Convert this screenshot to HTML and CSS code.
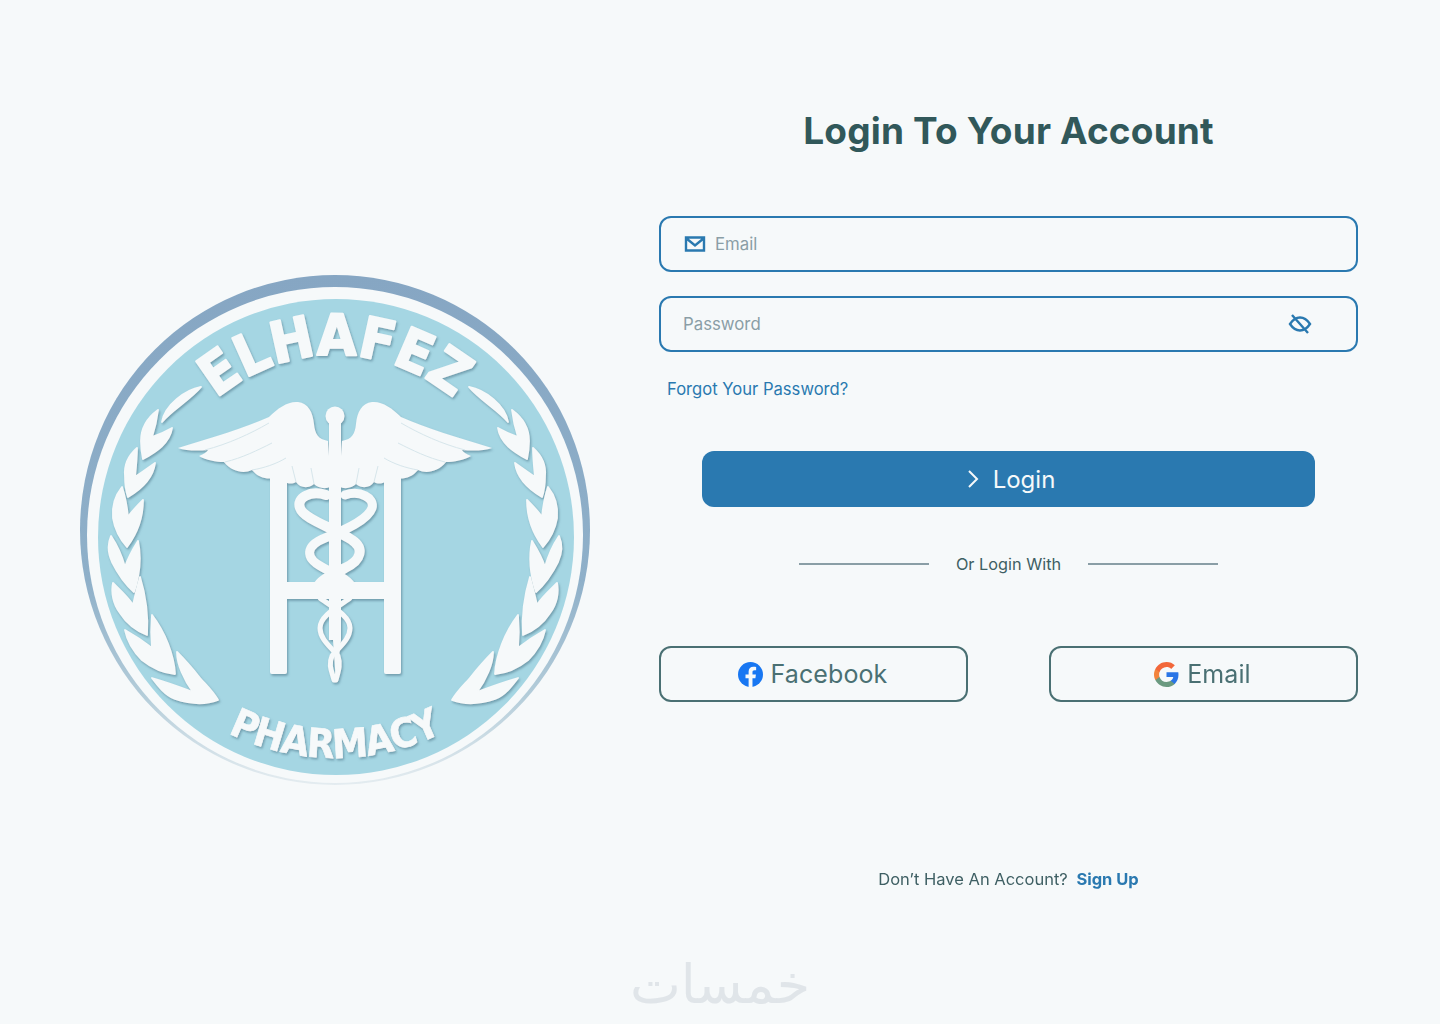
FILE: index.html
```html
<!DOCTYPE html>
<html lang="en">
<head>
<meta charset="utf-8">
<title>Login</title>
<link rel="stylesheet" href="styles.css">
</head>
<body>
<div class="page">
  <main class="main">
    <div class="brand">
      <svg class="logo" viewBox="70 260 530 540" width="530" height="540" aria-label="Elhafez Pharmacy">
        <defs>
          <linearGradient id="rim" x1="0" y1="0" x2="0" y2="1">
            <stop offset="0" stop-color="#86a6c3"/>
            <stop offset="0.6" stop-color="#8fb0c9"/>
            <stop offset="0.82" stop-color="#b3ccd9"/>
            <stop offset="1" stop-color="#e4ecf0"/>
          </linearGradient>
          <filter id="sh" x="-20%" y="-20%" width="140%" height="140%">
            <feDropShadow dx="1.2" dy="1.8" stdDeviation="1.1" flood-color="#5f8a9c" flood-opacity="0.75"/>
          </filter>
          <g id="wreath">
            <path d="M201 387C185 390 165 405 162 422C172 410 190 400 201 387Z"/>
            <path d="M158 410C147 418 141 429 141 441C141 449 142 454 143 459C156 452 170 443 172 428C165 432 158 435 152 437C155 428 157 418 158 410Z"/>
            <path d="M137 448C128 456 124 466 125 476C125 484 126 491 128 497C140 490 153 479 155 463C148 468 141 473 135 477C136 467 137 457 137 448Z"/>
            <path d="M122 487C114 497 112 508 113 518C115 530 121 540 127 547C136 535 143 518 143 500C138 505 132 511 128 517C127 507 125 496 122 487Z"/>
            <path d="M111 536C107 545 108 553 112 562C118 574 125 584 134 592C139 577 142 560 138 541C133 549 128 558 125 567C122 556 117 545 111 536Z"/>
            <path d="M113 583C111 592 113 604 120 613C127 624 137 631 147 635C148 620 147 600 140 577C137 588 135 596 133 605C128 597 120 590 113 583Z"/>
            <path d="M125 630C127 640 133 651 142 660C152 668 164 673 175 674C174 655 165 632 152 615C151 626 151 637 152 648C143 641 134 635 125 630Z"/>
            <path d="M152 678C158 686 165 695 175 699C190 704 205 705 218 700C212 690 205 684 200 678C192 668 185 660 177 652C177 664 184 680 193 692C180 687 166 682 152 678Z"/>
          </g>
          <g id="wing">
            <path d="M178 448C210 438 245 428 269 417C278 408 288 401 298 402C308 403 313 412 314 424C315 434 318 439 328 441L331 486C326 490 318 488 314 484C308 489 300 488 296 482C290 486 282 482 280 476C272 480 260 480 252 470C244 474 232 472 224 462C216 462 206 460 199 456C204 454 207 452 208 450C198 451 186 451 178 448Z"/>
          </g>
          <g id="wing-lines">
            <path d="M205 450C228 444 250 434 269 423M225 462C242 458 258 450 272 443M252 470C264 468 276 464 286 458M296 482L292 466M314 484L311 468"/>
          </g>
          <path id="arcTop" d="M152 538A183 183 0 0 1 518 538"/>
          <path id="arcBottom" d="M105 540A230 218 0 0 0 565 540"/>
        </defs>
        <circle class="logo-rim" cx="335" cy="530" r="255"/>
        <circle class="logo-ring" cx="335" cy="535" r="248"/>
        <circle class="logo-disc" cx="336" cy="537" r="238"/>
        <g class="logo-art" filter="url(#sh)">
          <use class="leaves" href="#wreath"/>
          <use class="leaves" href="#wreath" transform="translate(670 0) scale(-1 1)"/>
          <text class="logo-name"><textPath href="#arcTop" startOffset="50%" text-anchor="middle">ELHAFEZ</textPath></text>
          <text class="logo-sub"><textPath href="#arcBottom" startOffset="50%" text-anchor="middle">PHARMACY</textPath></text>
          <path d="M270 470H287V582H384V470H401V672Q401 674 399 674H386Q384 674 384 672V599H287V672Q287 674 285 674H272Q270 674 270 672Z"/>
          <use href="#wing"/>
          <use href="#wing" transform="translate(670 0) scale(-1 1)"/>
          <path d="M329 420H341V640L336 682L333 640H329Z"/>
          <circle cx="335" cy="416" r="9.500"/>
          <path class="snake s9" d="M326 495C310 490 296 498 300 508C304 520 335 528 352 540C364 548 362 560 345 568C332 575 320 580 317 588"/>
          <path class="snake s8" d="M345 495C360 490 375 498 372 508C368 520 345 530 325 538C305 546 305 558 322 567C335 574 350 580 352 588"/>
          <path class="snake s5" d="M320 598C330 606 350 615 350 628C350 640 338 648 332 656C328 665 332 672 334 680"/>
          <path class="snake s5" d="M350 598C340 606 320 615 320 628C320 640 332 648 338 656C341 665 338 672 336 680"/>
        </g>
        <use class="logo-line" href="#wing-lines"/>
        <use class="logo-line" href="#wing-lines" transform="translate(670 0) scale(-1 1)"/>
      </svg>
    </div>

    <section class="panel">
      <h1 class="title">Login To Your Account</h1>
      <form class="form">
        <label class="field">
          <svg class="icon-mail" viewBox="0 0 22 16" width="22" height="16"><path d="M2 1.500H20V14.500H2ZM2.500 2.500L11 9.500L19.500 2.500"/></svg>
          <input class="input" type="text" placeholder="Email">
        </label>
        <label class="field field-pass">
          <input class="input" type="text" placeholder="Password">
          <svg class="icon-eye" viewBox="0 0 24 20" width="24" height="20"><path d="M2 10C5 5.500 8.500 3.500 12 3.500C15.500 3.500 19 5.500 22 10C19 14.500 15.500 16.500 12 16.500C8.500 16.500 5 14.500 2 10ZM4 1L20 19"/></svg>
        </label>
        <a class="forgot" href="#">Forgot Your Password?</a>
        <button class="login" type="button">
          <svg class="icon-chev" viewBox="0 0 12 18" width="12" height="18"><path d="M2 1L10 9L2 17"/></svg>
          <span>Login</span>
        </button>
      </form>
      <div class="divider"><span class="rule"></span><span class="divider-text">Or Login With</span><span class="rule"></span></div>
      <div class="social">
        <button class="social-btn" type="button">
          <svg viewBox="0 0 24 24" width="25" height="25"><circle cx="12" cy="12" r="12" fill="#1877f2"/><path fill="#f6f9fa" d="M16.700 15.500L17.200 12H13.900V9.700C13.900 8.700 14.400 7.800 15.900 7.800H17.400V4.800S16 4.600 14.700 4.600C12 4.600 10.200 6.200 10.200 9.200V12H7.200V15.500H10.200V23.900C10.800 24 11.400 24 12 24S13.300 24 13.900 23.900V15.500Z"/></svg>
          <span>Facebook</span>
        </button>
        <button class="social-btn" type="button">
          <svg viewBox="0 0 24 24" width="25" height="25"><path fill="#2a75e6" d="M23.500 12.300C23.500 11.400 23.400 10.600 23.300 9.800H12V14.400H18.500C18.200 15.900 17.300 17.200 16 18.100V21H19.900C22.100 19 23.500 15.900 23.500 12.300Z"/><path fill="#6b9a80" d="M12 24C15.200 24 18 22.900 19.900 21L16 18.100C14.900 18.800 13.600 19.200 12 19.200C8.900 19.200 6.300 17.100 5.300 14.300H1.300V17.300C3.300 21.300 7.300 24 12 24Z"/><path fill="#f3843c" d="M5.300 14.300C5 13.600 4.900 12.800 4.900 12S5 10.400 5.300 9.700V6.700H1.300C.5 8.300 0 10.100 0 12S.5 15.700 1.300 17.300Z"/><path fill="#f2673a" d="M12 4.800C13.800 4.800 15.300 5.400 16.500 6.600L20 3.100C18 1.200 15.200 0 12 0C7.300 0 3.300 2.700 1.300 6.700L5.300 9.700C6.300 6.900 8.900 4.800 12 4.800Z"/></svg>
          <span>Email</span>
        </button>
      </div>
      <p class="signup">Don’t Have An Account? <a class="signup-link" href="#">Sign Up</a></p>
    </section>
  </main>
  <footer class="footer"><span class="watermark" lang="ar" dir="rtl">خمسات</span></footer>
</div>
</body>
</html>
```

FILE: styles.css
```css
* { box-sizing: border-box; }

html, body {
  margin: 0;
  height: 100%;
}

body {
  background: #f6f9fa;
  color: #3e5f63;
  font-family: "Inter", "Liberation Sans", sans-serif;
  overflow: hidden;
}

.page {
  display: flex;
  flex-direction: column;
  height: 1024px;
}

.main {
  display: flex;
  height: 952px;
}

.brand {
  width: 659px;
  padding: 260px 0 0 70px;
}

.logo {
  display: block;
}

.logo-rim { fill: url(#rim); }
.logo-ring { fill: #f6f9fa; }
.logo-disc { fill: #a5d6e3; }
.logo-art { fill: #f6f9fa; }

.leaves {
  stroke: #f6f9fa;
  stroke-width: 1.8;
  stroke-linejoin: round;
}

.logo-line {
  fill: none;
  stroke: #d3e3e9;
  stroke-width: 0.9;
}

.logo-name {
  font-family: "DejaVu Sans Condensed", "DejaVu Sans", sans-serif;
  font-stretch: condensed;
  font-weight: 700;
  font-size: 57px;
  stroke: #f6f9fa;
  stroke-width: 2;
  stroke-linejoin: round;
}

.logo-sub {
  font-family: "DejaVu Sans Condensed", "DejaVu Sans", sans-serif;
  font-stretch: condensed;
  font-weight: 700;
  font-size: 40px;
  letter-spacing: -0.8px;
  stroke: #f6f9fa;
  stroke-width: 0.6;
  stroke-linejoin: round;
}

.snake {
  fill: none;
  stroke: #f6f9fa;
  stroke-linecap: round;
}
.s9 { stroke-width: 10; }
.s8 { stroke-width: 9; }
.s5 { stroke-width: 5; }

.panel {
  width: 699px;
  padding-top: 104px;
  display: flex;
  flex-direction: column;
}

.title {
  margin: 0;
  font-size: 37px;
  line-height: 54px;
  font-weight: 700;
  letter-spacing: 0.15px;
  text-align: center;
  color: #31585a;
}

.form {
  margin-top: 58px;
  display: flex;
  flex-direction: column;
}

.field {
  display: flex;
  align-items: center;
  gap: 9px;
  height: 56px;
  padding: 0 23px;
  border: 2px solid #2a79b0;
  border-radius: 12px;
}

.field-pass {
  margin-top: 24px;
  padding: 0 44px 0 22px;
}

.input {
  flex: 1;
  min-width: 0;
  border: 0;
  outline: 0;
  padding: 0;
  background: transparent;
  font: inherit;
  font-size: 16.8px;
  color: #3e5f63;
}

.input::placeholder {
  color: #8a9ea6;
  opacity: 1;
}

.icon-mail path,
.icon-eye path {
  fill: none;
  stroke: #2a79b0;
  stroke-width: 2.4;
}

.forgot {
  margin: 24px 0 0 8px;
  font-size: 16.6px;
  line-height: 27px;
  color: #2a79b0;
  text-decoration: none;
}

.login {
  align-self: center;
  margin-top: 48px;
  width: 613px;
  height: 56px;
  padding-left: 11px;
  display: flex;
  align-items: center;
  justify-content: center;
  gap: 14px;
  border: 0;
  border-radius: 12px;
  background: #2a79b0;
  color: #f6f9fa;
  font: inherit;
  font-size: 24px;
}

.icon-chev path {
  fill: none;
  stroke: #f6f9fa;
  stroke-width: 2;
}

.divider {
  margin-top: 43px;
  display: flex;
  align-items: center;
  justify-content: center;
  gap: 27px;
  height: 27px;
  font-size: 16.3px;
  color: #3e5f63;
}

.rule {
  width: 130px;
  height: 2px;
  background: #8a9ea6;
}

.social {
  margin-top: 69px;
  display: flex;
  justify-content: space-between;
}

.social-btn {
  width: 309px;
  height: 56px;
  padding: 0 2px 0 0;
  display: flex;
  align-items: center;
  justify-content: center;
  gap: 8px;
  background: transparent;
  border: 2px solid #4a7073;
  border-radius: 12px;
  color: #4a7073;
  font: inherit;
  font-size: 25px;
  letter-spacing: 0.1px;
}

.signup {
  margin: 164px 0 0;
  font-size: 16.5px;
  line-height: 27px;
  text-align: center;
  color: #3e5f63;
}

.signup-link {
  margin-left: 4px;
  font-weight: 700;
  color: #2a79b0;
  text-decoration: none;
}

.footer {
  display: flex;
  justify-content: center;
  padding-top: 3px;
}

.watermark {
  font-family: "DejaVu Sans", sans-serif;
  font-size: 54px;
  line-height: 60px;
  color: #e0e5e9;
}
```
